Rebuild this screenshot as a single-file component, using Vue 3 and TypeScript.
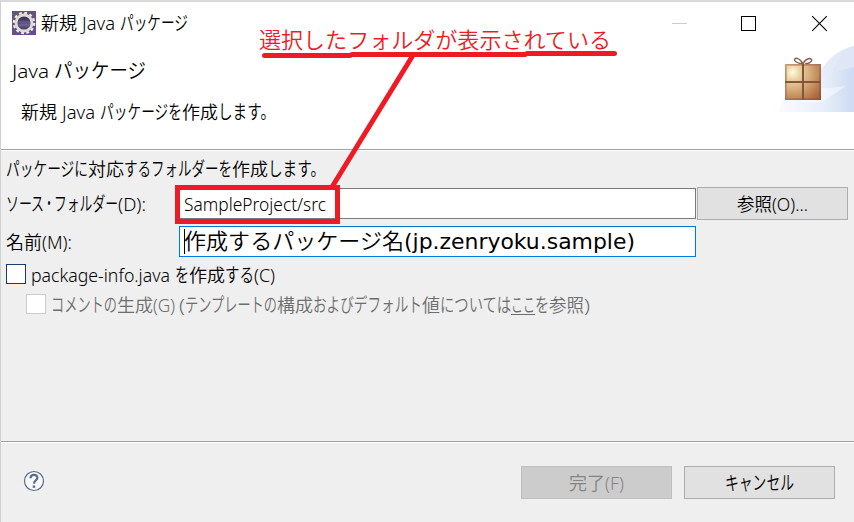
<script setup lang="ts">
import { h, type FunctionalComponent } from 'vue'

// [text, advance width]
type Run = [string, number]

const scriptOf = (text: string) =>
  /[\u4e00-\u9fff]/.test(text) ? 'kanji' : /[\u3040-\u30ff]/.test(text) ? 'kana' : 'latin'

// A line of interface text: each run is fitted to its own advance width,
// so kana can be set narrower than kanji.
const Line: FunctionalComponent<{ runs: Run[]; underline?: number }> = (props) => {
  let x = 0
  const nodes = props.runs.map(([text, width], i) => {
    const node = text === '\u00a0' ? null : h('text', {
      x, y: 18, class: scriptOf(text), textLength: width, lengthAdjust: 'spacingAndGlyphs',
    }, text)
    const rule = props.underline === i
      ? h('path', { d: `M${x} 20.5H${x + width}`, stroke: 'currentColor', 'stroke-width': 1 })
      : null
    x += width
    return [node, rule]
  })
  return h('svg', { class: 'line', width: x, height: 24, fill: 'currentColor' }, nodes)
}
Line.props = ['runs', 'underline']

const title: Run[] = [['新規', 36], ['\u00a0', 5], ['Java', 33], ['\u00a0', 5], ['パッケージ', 68]]
const heading: Run[] = [['Java', 37], ['\u00a0', 5], ['パッケージ', 92]]
const summary: Run[] = [['新規', 36], ['\u00a0', 5], ['Java', 33], ['\u00a0', 5], ['パッケージを', 82], ['作成', 36], ['します。', 57]]
const intro: Run[] = [['パッケージに', 82], ['対応', 36], ['するフォルダーを', 108], ['作成', 36], ['します。', 57]]
const folderLabel: Run[] = [['ソース', 38], ['・', 10], ['フォルダー', 64], ['(D):', 28]]
const nameLabel: Run[] = [['名前', 36], ['(M):', 30]]
const folder: Run[] = [['SampleProject/src', 142]]
const packageName: Run[] = [['作成するパッケージ名', 220], ['(jp.zenryoku.sample)', 231]]
const infoLabel: Run[] = [['package-info.java', 139], ['\u00a0', 5], ['を', 14], ['作成', 36], ['する', 29], ['(C)', 21]]
const commentLabel: Run[] = [
  ['コメントの', 66], ['生成', 36], ['(G)', 22], ['\u00a0', 4], ['(', 6], ['テンプレートの', 92],
  ['構成', 36], ['およびデフォルト', 109], ['値', 18], ['については', 71], ['ここ', 24], ['を', 14], ['参照', 35], [')', 6],
]
const browse: Run[] = [['参照', 35], ['(O)...', 36]]
const finish: Run[] = [['完了', 36], ['(F)', 19]]
const cancel: Run[] = [['キャンセル', 69]]
const note: Run[] = [['選択したフォルダが表示されている', 352]]
</script>

<template>
  <div class="dialog">
    <header class="banner">
      <div class="titlebar">
        <svg class="app-icon" width="24" height="24" viewBox="0 0 24 24">
          <defs>
            <linearGradient id="lens" x2="0" y2="1"><stop offset="0" stop-color="#29233b" /><stop offset=".6" stop-color="#65598d" /><stop offset="1" stop-color="#40345e" /></linearGradient>
            <linearGradient id="plate" x2="1" y2="1"><stop offset="0" stop-color="#62586d" /><stop offset="1" stop-color="#6b4795" /></linearGradient>
          </defs>
          <rect width="24" height="24" fill="url(#plate)" />
          <circle cx="12" cy="12" r="10.2" fill="none" stroke="#efeeea" stroke-width="2.2" stroke-dasharray="2.8 2.54" />
          <circle cx="12" cy="12" r="8" fill="url(#lens)" stroke="#dddcd8" stroke-width="2.8" />
          <path d="M6.500 11h11M7 14h10" stroke="#82779f" stroke-width=".6" />
        </svg>
        <Line class="title" :runs="title" />
        <svg class="controls" width="155" height="16" viewBox="0 0 155 16" fill="none" shape-rendering="crispEdges">
          <path d="M0 7.5h15" stroke="#ccc" />
          <path d="M69.5 .5h14v14h-14z" stroke="#000" />
          <path d="M140.2 .2l14.6 14.6M154.8 .2l-14.6 14.6" stroke="#000" stroke-width="1.1" shape-rendering="auto" />
        </svg>
      </div>
      <div class="intro">
        <div class="copy">
          <Line class="heading" :runs="heading" />
          <Line class="summary" :runs="summary" />
        </div>
        <svg class="art" width="75" height="66" viewBox="0 0 75 66">
          <defs>
            <linearGradient id="sky"><stop offset="0" stop-color="#fafbfe" /><stop offset=".6" stop-color="#e8eefa" /><stop offset="1" stop-color="#cddaf1" /></linearGradient>
            <linearGradient id="sky2"><stop offset="0" stop-color="#f5f7fd" /><stop offset="1" stop-color="#dce5f6" /></linearGradient>
            <radialGradient id="box" cx=".2" cy=".22" r="1"><stop offset="0" stop-color="#fffbe6" /><stop offset=".2" stop-color="#ebd6a5" /><stop offset=".6" stop-color="#cd9f6c" /><stop offset="1" stop-color="#ae643b" /></radialGradient>
            <linearGradient id="edge" x2="1" y2="1"><stop offset="0" stop-color="#c99672" /><stop offset="1" stop-color="#89543c" /></linearGradient>
          </defs>
          <path d="M37 32Q51 5 75 0V66H0Q2 52 15 47z" fill="url(#sky2)" />
          <path d="M55 22Q62 8 75 1V40H50z" fill="#dfe7f7" opacity=".65" />
          <path d="M0 66Q2 52 12 47L36 36Q54 25 75 21V66z" fill="url(#sky)" />
          <path d="M30 43Q48 43 67 40L43 56H20z" fill="#fff" opacity=".45" />
          <path d="M23 18Q15 16 15.5 13.500Q18 10.500 22 15L24 18Q26 13 31 12.500Q35 14 30 17L26 18" fill="none" stroke="#89604e" stroke-width="1.5" />
          <rect x="6.800" y="18.800" width="34.400" height="34.400" fill="url(#box)" stroke="url(#edge)" stroke-width="1.6" />
          <path d="M24 18v36M6 36h36" stroke="#855340" stroke-width="2" />
        </svg>
      </div>
    </header>

    <main class="form">
      <Line class="lead" :runs="intro" />
      <div class="row first">
        <Line class="label" :runs="folderLabel" />
        <div class="field"><Line class="value" :runs="folder" /></div>
        <button class="button" type="button"><Line :runs="browse" /></button>
      </div>
      <div class="row second">
        <Line class="label" :runs="nameLabel" />
        <div class="field focused"><i class="caret"></i><Line class="sample" :runs="packageName" /></div>
      </div>
      <label class="check"><i class="tick"></i><Line :runs="infoLabel" /></label>
      <label class="check disabled"><i class="tick"></i><Line :runs="commentLabel" :underline="10" /></label>
    </main>

    <footer class="footer">
      <svg class="help" width="22" height="22" viewBox="0 0 22 22" fill="none">
        <circle cx="11" cy="11" r="9.500" fill="#f8f8f8" stroke="#566b91" stroke-width="1.2" />
        <path d="M7.500 8.300C7.500 3.700 14.700 3.900 14.400 7.900C14.200 10.300 11.200 10.400 11 13.600" stroke="#566b91" stroke-width="2.200" />
        <path d="M9.700 15.500h2.500v2.300H9.700z" fill="#566b91" />
      </svg>
      <button class="button off" type="button" disabled><Line :runs="finish" /></button>
      <button class="button" type="button"><Line :runs="cancel" /></button>
    </footer>

    <div class="annotation">
      <Line class="note" :runs="note" />
      <svg class="marks" width="854" height="522" viewBox="0 0 854 522" fill="none" stroke="#ed1c24" stroke-width="5">
        <path d="M264.500 55.500H350M352 54.500H525M527 53.500H614.500" stroke-linecap="round" />
        <path d="M412.500 56L332 187" />
        <path d="M177.500 187.500h160v34h-160z" />
      </svg>
    </div>
  </div>
</template>

<style>
body { margin: 0; }
</style>

<style scoped>
.dialog {
  position: relative;
  box-sizing: border-box;
  width: 854px;
  height: 522px;
  overflow: hidden;
  display: flex;
  flex-direction: column;
  border-top: 2px solid #d9d9d9;
  border-left: 1px solid #d0d0d0;
  background: #efefef;
  color: #000;
  font-family: "Noto Sans", "Noto Sans CJK JP", sans-serif;
  font-size: 18px;
  font-weight: 350;
}
svg { display: block; flex: none; overflow: visible; }
.line :deep(.kana) { font-size: 1.08em; }
.banner { box-sizing: border-box; height: 149px; background: #fff; border-bottom: 1px solid #fff; box-shadow: inset 0 -1px #a0a0a0; }
.titlebar { display: flex; height: 44px; padding-left: 11px; }
.app-icon { margin-top: 9px; }
.title { margin: 10px 484px 0 5px; }
.controls { margin-top: 14px; }
.intro { display: flex; justify-content: space-between; }
.copy { padding: 14px 0 0 11px; }
.heading { font-size: 19px; }
.summary { margin: 17px 0 0 9px; }
.form { height: 292px; padding-left: 5px; box-sizing: border-box; border-bottom: 1px solid #fff; box-shadow: inset 0 -1px #a0a0a0; }
.lead { padding-top: 7px; }
.row { display: grid; grid-template-columns: 173px 518px 151px; align-items: center; }
.row.first { height: 33px; margin-top: 5px; }
.row.second { height: 31px; margin-top: 6px; }
.label, .value, .button .line { margin-top: 2px; }
.field { box-sizing: border-box; display: flex; align-items: center; width: 517px; height: 31px; padding-left: 4px; border: 1px solid #7a7a7a; background: #fff; }
.field.focused { border-color: #0078d7; }
.caret { width: 1px; height: 25px; margin-right: -1px; background: #000; }
.sample { margin-top: 2px; font-size: 22px; font-family: "DejaVu Sans", "Noto Sans CJK JP", sans-serif; }
.sample :deep(.kanji) { font-family: "Noto Sans CJK JP", sans-serif; }
.sample :deep(.latin) { font-weight: 400; font-size: 21px; }
.button { box-sizing: border-box; display: flex; align-items: center; justify-content: center; width: 151px; height: 33px; padding: 0; border: 1px solid #adadad; background: #e1e1e1; color: inherit; font: inherit; }
.button.off { border-color: #bfbfbf; background: #ccc; color: #858585; }
.check { display: flex; gap: 5px; height: 20px; margin-top: 7px; align-items: flex-start; }
.check.disabled { margin: 10px 0 0 20px; color: #6d6d6d; }
.tick { box-sizing: border-box; width: 20px; height: 20px; border: 1px solid #1c3c62; background: #fff; }
.disabled .tick { border-color: #ccc; }
.footer { display: flex; padding: 23px 0 0 22px; }
.help { margin: 4px 476px 0 0; }
.footer .button + .button { margin-left: 12px; }
.annotation { position: absolute; inset: -2px 0 0 -1px; pointer-events: none; }
.note { margin: 30px 0 0 259px; color: #ed1c24; font-size: 22px; }
.marks { position: absolute; inset: 0; }
</style>
